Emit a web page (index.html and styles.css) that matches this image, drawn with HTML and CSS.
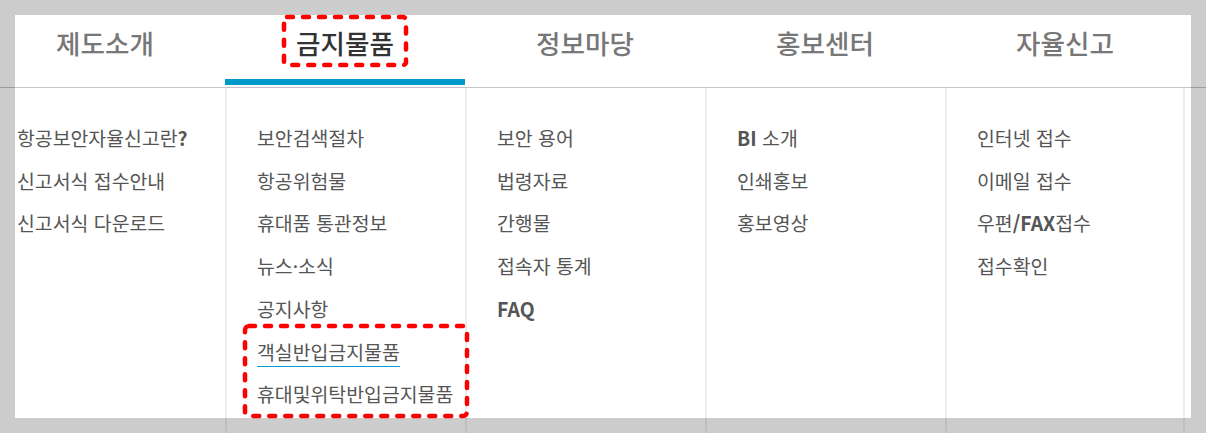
FILE: index.html
```html
<!DOCTYPE html>
<html lang="ko">
<head>
    <meta charset="UTF-8">
    <meta name="viewport" content="width=device-width, initial-scale=1.0">
    <title>금지물품 메뉴</title>
    <link rel="stylesheet" href="styles.css">
</head>
<body>
    <!-- Top menu -->
    <div class="gnb">
        <ul class="tabs">
            <li class="tab">제도소개</li>
            <li class="tab active">
                금지물품
                <svg class="mark mark-tab" viewBox="0 0 126 52">
                    <rect x="2" y="2" width="122" height="48" rx="3"></rect>
                </svg>
            </li>
            <li class="tab">정보마당</li>
            <li class="tab">홍보센터</li>
            <li class="tab">자율신고</li>
        </ul>
    </div>

    <!-- Sub menu -->
    <div class="sub">
        <ul class="col">
            <li>항공보안자율신고란<span class="en">?</span></li>
            <li>신고서식 접수안내</li>
            <li>신고서식 다운로드</li>
        </ul>
        <ul class="col">
            <li>보안검색절차</li>
            <li>항공위험물</li>
            <li>휴대품 통관정보</li>
            <li>뉴스·소식</li>
            <li>공지사항</li>
            <li><span class="current">객실반입금지물품</span></li>
            <li>휴대및위탁반입금지물품</li>
            <svg class="mark mark-sub" viewBox="0 0 226 94">
                <rect x="2" y="2" width="222" height="90" rx="4"></rect>
            </svg>
        </ul>
        <ul class="col">
            <li>보안 용어</li>
            <li>법령자료</li>
            <li>간행물</li>
            <li>접속자 통계</li>
            <li><span class="en">FAQ</span></li>
        </ul>
        <ul class="col">
            <li><span class="en">BI</span> 소개</li>
            <li>인쇄홍보</li>
            <li>홍보영상</li>
        </ul>
        <ul class="col last">
            <li>인터넷 접수</li>
            <li>이메일 접수</li>
            <li>우편<span class="en">/FAX</span>접수</li>
            <li>접수확인</li>
        </ul>
    </div>

    <div class="frame"></div>
</body>
</html>
```

FILE: styles.css
```css
body {
    margin: 0;
    overflow: hidden;
    background: #fff;
    font-family: "Noto Sans CJK KR", "Noto Sans", sans-serif;
}
ul {
    list-style: none;
    margin: 0;
    padding: 0;
}
.gnb {
    border-bottom: 1px solid #c4c4c4;
}
.tabs {
    display: flex;
    margin-left: -15px;
    height: 87px;
}
.tab {
    position: relative;
    flex: 0 0 240px;
    text-align: center;
    line-height: 86px;
    font-size: 26.6px;
    font-weight: 500;
    color: #777;
}
.tab.active {
    color: #333;
}
.tab.active::after {
    content: "";
    position: absolute;
    left: 0;
    right: 0;
    bottom: 2px;
    height: 6px;
    background: #0099c8;
}
.sub {
    display: flex;
    margin-left: -15px;
    height: 345px;
}
.col {
    position: relative;
    box-sizing: border-box;
    flex: 0 0 240px;
    padding: 29px 0 0 30px;
    border-left: 2px solid #eee;
}
.col:first-child {
    border-left-color: transparent;
}
.col.last {
    border-right: 2px solid #eee;
}
.col li {
    line-height: 42.7px;
    font-size: 19.4px;
    color: #555;
    white-space: nowrap;
}
.en {
    font-weight: 700;
}
.current {
    display: inline-block;
    line-height: 24px;
    padding-bottom: 2px;
    border-bottom: 1px solid #00a0d2;
}
.mark {
    position: absolute;
    z-index: 3;
    overflow: visible;
}
.mark rect {
    fill: none;
    stroke: #ff0000;
    stroke-width: 4.5;
    stroke-dasharray: 6 10;
    stroke-linecap: round;
}
.mark-tab {
    left: 57px;
    top: 15px;
    width: 126px;
    height: 52px;
}
.mark-sub {
    left: 16px;
    top: 236px;
    width: 226px;
    height: 94px;
}
.frame {
    position: fixed;
    inset: 0;
    z-index: 2;
    box-sizing: border-box;
    border: 15px solid rgba(0, 0, 0, 0.2);
    pointer-events: none;
}
```
